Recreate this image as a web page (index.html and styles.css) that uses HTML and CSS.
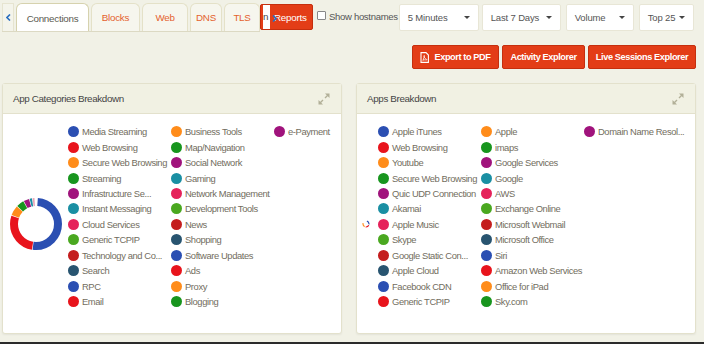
FILE: index.html
```html
<!DOCTYPE html>
<html lang="en">
<head>
  <meta charset="UTF-8" />
  <meta name="viewport" content="width=device-width, initial-scale=1.0"/>
  <title>Connections</title>
  <link rel="stylesheet" href="styles.css">
</head>
<body>
  <div class="toolbar">
    <div class="tabs">
      <div class="tab-nav">
        <svg width="5" height="7" viewBox="0 0 5 7"><polyline points="4,0.5 1,3.5 4,6.5" fill="none" stroke="#2a6ebf" stroke-width="1.6"/></svg>
      </div>
      <div class="tab active tab-connections">Connections</div>
      <div class="tab tab-blocks">Blocks</div>
      <div class="tab tab-web">Web</div>
      <div class="tab tab-dns">DNS</div>
      <div class="tab tab-tls">TLS</div>
    </div>
    <button class="btn-red btn-reports">
      <span class="reports-hidden">n</span>
      Reports
      <span class="tab-next">
        <svg width="5" height="7" viewBox="0 0 5 7"><polyline points="1,0.5 4,3.5 1,6.5" fill="none" stroke="#2a6ebf" stroke-width="1.6"/></svg>
      </span>
    </button>
    <label class="hostnames"><span class="checkbox"></span>Show hostnames</label>
    <div class="select s-interval">5 Minutes<span class="caret"></span></div>
    <div class="select s-range">Last 7 Days<span class="caret"></span></div>
    <div class="select s-metric">Volume<span class="caret"></span></div>
    <div class="select s-top">Top 25<span class="caret"></span></div>
  </div>

  <div class="actions">
    <button class="btn-red btn-action btn-pdf">
      <svg class="pdf-icon" width="9" height="11" viewBox="0 0 9 11">
        <path d="M1 0.6 H6 L8.4 3 V10.4 H1 Z" fill="none" stroke="#fff" stroke-width="1.1"/>
        <path d="M3 8.2 C3.6 6.6 4.4 4.6 4.4 3.8 C4.4 3.2 3.8 3.3 3.9 4 C4.1 5.4 5.4 6.9 6.6 7.4 C7.2 7.6 7 8.2 6.2 8 C5 7.7 3.6 7.7 2.6 8.6" fill="none" stroke="#fff" stroke-width="0.8"/>
      </svg>
      Export to PDF
    </button>
    <button class="btn-red btn-action btn-activity">Activity Explorer</button>
    <button class="btn-red btn-action btn-live">Live Sessions Explorer</button>
  </div>

  <div class="panels">
    <div class="panel">
      <div class="panel-header">
        <span class="panel-title">App Categories Breakdown</span>
        <svg class="expand" width="12" height="12" viewBox="0 0 12 12">
          <path d="M7 5 L10.5 1.5 M5 7 L1.5 10.5" stroke="#b2b098" stroke-width="1.4"/>
          <polygon points="7,0.5 11.5,0.5 11.5,5" fill="#b2b098"/>
          <polygon points="0.5,7 0.5,11.5 5,11.5" fill="#b2b098"/>
        </svg>
      </div>
      <div class="panel-body">
        <div class="chart chart-donut">
          <svg width="52" height="52" viewBox="0 0 52 52">
            <g transform="rotate(-90 26 26)" fill="none" stroke-width="8">
              <circle cx="26" cy="26" r="22" pathLength="100" stroke="#2b4fb2" stroke-dasharray="51 100" stroke-dashoffset="-1.2"/>
              <circle cx="26" cy="26" r="22" pathLength="100" stroke="#e8141c" stroke-dasharray="27.6 100" stroke-dashoffset="-52.6"/>
              <circle cx="26" cy="26" r="22" pathLength="100" stroke="#ff8c1a" stroke-dasharray="6.2 100" stroke-dashoffset="-80.6"/>
              <circle cx="26" cy="26" r="22" pathLength="100" stroke="#18951e" stroke-dasharray="4.6 100" stroke-dashoffset="-87.2"/>
              <circle cx="26" cy="26" r="22" pathLength="100" stroke="#a0137c" stroke-dasharray="3.4 100" stroke-dashoffset="-92.2"/>
              <circle cx="26" cy="26" r="22" pathLength="100" stroke="#1a8fa3" stroke-dasharray="1.4 100" stroke-dashoffset="-96"/>
              <circle cx="26" cy="26" r="22" pathLength="100" stroke="#e8a0b4" stroke-dasharray="1.2 100" stroke-dashoffset="-97.8"/>
            </g>
          </svg>
        </div>
        <div class="legend" id="legend-categories"></div>
      </div>
    </div>

    <div class="panel">
      <div class="panel-header">
        <span class="panel-title">Apps Breakdown</span>
        <svg class="expand" width="12" height="12" viewBox="0 0 12 12">
          <path d="M7 5 L10.5 1.5 M5 7 L1.5 10.5" stroke="#b2b098" stroke-width="1.4"/>
          <polygon points="7,0.5 11.5,0.5 11.5,5" fill="#b2b098"/>
          <polygon points="0.5,7 0.5,11.5 5,11.5" fill="#b2b098"/>
        </svg>
      </div>
      <div class="panel-body">
        <div class="chart chart-loading">
          <svg width="8" height="8" viewBox="0 0 8 8">
            <g transform="rotate(-90 4 4)" fill="none" stroke-width="1.2">
              <circle cx="4" cy="4" r="3" pathLength="100" stroke="#2b4fb2" stroke-dasharray="22 100" stroke-dashoffset="-5"/>
              <circle cx="4" cy="4" r="3" pathLength="100" stroke="#e8141c" stroke-dasharray="20 100" stroke-dashoffset="-32"/>
              <circle cx="4" cy="4" r="3" pathLength="100" stroke="#ff8c1a" stroke-dasharray="22 100" stroke-dashoffset="-58"/>
            </g>
          </svg>
        </div>
        <div class="legend" id="legend-apps"></div>
      </div>
    </div>
  </div>

  <div class="footer"></div>

  <script>
    const categorias = [
      'Media Streaming', 'Web Browsing', 'Secure Web Browsing', 'Streaming',
      'Infrastructure Se...', 'Instant Messaging', 'Cloud Services', 'Generic TCPIP',
      'Technology and Co...', 'Search', 'RPC', 'Email',
      'Business Tools', 'Map/Navigation', 'Social Network', 'Gaming',
      'Network Management', 'Development Tools', 'News', 'Shopping',
      'Software Updates', 'Ads', 'Proxy', 'Blogging',
      'e-Payment'
    ];

    const apps = [
      'Apple iTunes', 'Web Browsing', 'Youtube', 'Secure Web Browsing',
      'Quic UDP Connection', 'Akamai', 'Apple Music', 'Skype',
      'Google Static Con...', 'Apple Cloud', 'Facebook CDN', 'Generic TCPIP',
      'Apple', 'imaps', 'Google Services', 'Google',
      'AWS', 'Exchange Online', 'Microsoft Webmail', 'Microsoft Office',
      'Siri', 'Amazon Web Services', 'Office for iPad', 'Sky.com',
      'Domain Name Resol...'
    ];

    function renderLegenda(id, itens) {
      const legenda = document.getElementById(id);
      itens.forEach((nome, i) => {
        const item = document.createElement('div');
        item.className = 'legend-item';
        item.innerHTML = `<span class="dot c${i % 10}"></span><span>${nome}</span>`;
        legenda.appendChild(item);
      });
    }

    renderLegenda('legend-categories', categorias);
    renderLegenda('legend-apps', apps);
  </script>
</body>
</html>
```

FILE: styles.css
```css
body {
  margin: 0;
  background-color: #f1f1e6;
  font-family: "Liberation Sans", Arial, sans-serif;
  color: #555;
  font-size: 9.5px;
  letter-spacing: -0.15px;
}

/* barra superior */
.toolbar {
  display: flex;
  align-items: flex-start;
  height: 31px;
  padding: 3px 0 0 2px;
}

.tabs {
  display: flex;
  width: 258px;
  height: 28px;
  border-bottom: 1px solid #dcd9c3;
  overflow: hidden;
  flex-shrink: 0;
}

.tab-nav {
  width: 12px;
  box-sizing: border-box;
  border: 1px solid #e6e4d0;
  border-bottom: none;
  background-color: #f4f4eb;
  display: flex;
  align-items: center;
  justify-content: center;
  margin-right: 2px;
}

.tab {
  box-sizing: border-box;
  height: 28px;
  border: 1px solid #e4e1c8;
  border-bottom: none;
  border-radius: 6px 6px 0 0;
  background-color: #f6f6ee;
  color: #e4622f;
  display: flex;
  align-items: center;
  justify-content: center;
  margin-right: 2px;
  flex-shrink: 0;
  font-size: 9.8px;
  letter-spacing: -0.25px;
}

.tab.active {
  background-color: white;
  border-color: #d6d2ae;
  color: #5a5a50;
  height: 29px;
}

.tab-connections { width: 73px; }
.tab-blocks { width: 49px; }
.tab-web { width: 46px; }
.tab-dns { width: 32px; }
.tab-tls { width: 36px; margin-right: 0; }

.btn-red {
  background-color: #e33d17;
  border: 1px solid #c52f0e;
  color: white;
  border-radius: 2px;
  font-family: inherit;
  font-size: 9.2px;
  font-weight: bold;
  letter-spacing: -0.4px;
  cursor: pointer;
  flex-shrink: 0;
}

.btn-reports {
  position: relative;
  box-sizing: border-box;
  width: 53px;
  height: 26px;
  margin-top: 1px;
  padding: 0 0 0 13px;
  text-align: left;
  font-weight: normal;
  font-size: 9.8px;
  letter-spacing: -0.25px;
}

.reports-hidden {
  position: absolute;
  left: 2px;
  top: 0;
  bottom: 0;
  width: 7px;
  background-color: white;
  color: #444;
  line-height: 24px;
  overflow: hidden;
}

.tab-next {
  position: absolute;
  left: 11px;
  top: 8px;
}

.hostnames {
  display: flex;
  align-items: center;
  gap: 3px;
  height: 27px;
  margin: 0 1px 0 4px;
  color: #555;
  white-space: nowrap;
  flex-shrink: 0;
  letter-spacing: -0.3px;
}

.checkbox {
  width: 7px;
  height: 7px;
  border: 1px solid #888;
  border-radius: 1px;
  background-color: white;
  margin-top: -2px;
}

.select {
  position: relative;
  box-sizing: border-box;
  height: 27px;
  margin-top: 1px;
  padding-left: 8px;
  background-color: white;
  border: 1px solid #e8e6d6;
  border-radius: 2px;
  display: flex;
  align-items: center;
  color: #555;
  white-space: nowrap;
  flex-shrink: 0;
}

.s-interval { width: 80px; }
.s-range { width: 79px; margin-left: 3px; }
.s-metric { width: 68px; margin-left: 5px; }
.s-top { width: 55px; margin-left: 5px; }

.caret {
  position: absolute;
  right: 8px;
  top: 11px;
  border-left: 3px solid transparent;
  border-right: 3px solid transparent;
  border-top: 3px solid #444;
}

/* botões de ação */
.actions {
  display: flex;
  justify-content: flex-end;
  gap: 3px;
  margin-top: 11px;
  padding-right: 8px;
}

.btn-action {
  box-sizing: border-box;
  height: 24px;
  padding: 0;
  display: flex;
  align-items: center;
  justify-content: center;
  gap: 5px;
}

.btn-pdf { width: 87px; }
.btn-activity { width: 83px; }
.btn-live { width: 108px; }

/* painéis */
.panels {
  display: flex;
  gap: 14px;
  margin-top: 14px;
  padding-left: 2px;
}

.panel {
  box-sizing: border-box;
  width: 340px;
  height: 251px;
  background-color: white;
  border: 1px solid #e3e1cc;
  border-radius: 3px;
  box-shadow: 0 1px 2px rgba(0,0,0,0.06);
  display: flex;
  flex-direction: column;
}

.panel-header {
  height: 30px;
  flex-shrink: 0;
  box-sizing: border-box;
  background-color: #f1f1e3;
  border-bottom: 1px solid #e3e1cc;
  display: flex;
  align-items: center;
  justify-content: space-between;
  padding: 0 11px 0 10px;
}

.panel-title {
  color: #444;
  font-size: 9.8px;
  letter-spacing: -0.35px;
}

.panel-body {
  flex: 1;
  display: flex;
}

.chart {
  box-sizing: border-box;
  display: flex;
  align-items: center;
  flex-shrink: 0;
}

.chart-donut {
  width: 65px;
  padding-left: 7px;
}

.chart-loading {
  width: 21px;
  padding-left: 5px;
}

.legend {
  display: grid;
  grid-auto-flow: column;
  grid-template-rows: repeat(12, 15.45px);
  grid-auto-columns: 103px;
  padding-top: 10px;
  align-content: start;
}

.legend-item {
  display: flex;
  align-items: center;
  gap: 3px;
  white-space: nowrap;
  color: #726d5e;
  font-size: 9.4px;
  letter-spacing: -0.4px;
}

.dot {
  width: 11px;
  height: 11px;
  border-radius: 50%;
  flex-shrink: 0;
}

.c0 { background-color: #2b4fb2; }
.c1 { background-color: #e8141c; }
.c2 { background-color: #ff8c1a; }
.c3 { background-color: #18951e; }
.c4 { background-color: #a0137c; }
.c5 { background-color: #1a8fa3; }
.c6 { background-color: #e5225a; }
.c7 { background-color: #4aa820; }
.c8 { background-color: #c41e1e; }
.c9 { background-color: #285470; }

.footer {
  margin-top: 8px;
  height: 2px;
  background-color: #2b2b2b;
}
```
